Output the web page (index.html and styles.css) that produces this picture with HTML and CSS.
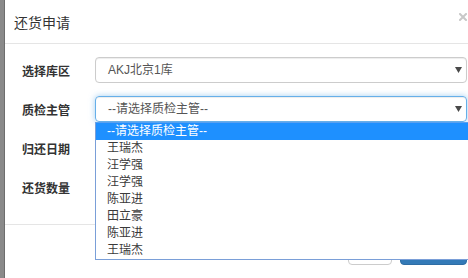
FILE: index.html
```html
<!DOCTYPE html>
<html lang="zh-CN">
<head>
<meta charset="utf-8">
<title>还货申请</title>
<link rel="stylesheet" href="styles.css">
</head>
<body>
<div class="modal">
  <div class="modal-header">
    <h4 class="modal-title">还货申请</h4>
    <button class="close" aria-label="关闭"><svg width="8" height="8" viewBox="0 0 8 8"><path d="M1 1L7 7M7 1L1 7" stroke="#c8c8c8" stroke-width="2" stroke-linecap="square"/></svg></button>
  </div>
  <div class="modal-body">
    <div class="form-row">
      <label class="control-label">选择库区</label>
      <div class="select"><span>AKJ北京1库</span><svg class="arrow" width="7" height="6" viewBox="0 0 7 6"><path d="M0 0H7L3.5 6Z" fill="#4a4a4a"/></svg></div>
    </div>
    <div class="form-row">
      <label class="control-label">质检主管</label>
      <div class="select focus"><span>--请选择质检主管--</span><svg class="arrow" width="7" height="6" viewBox="0 0 7 6"><path d="M0 0H7L3.5 6Z" fill="#4a4a4a"/></svg></div>
    </div>
    <div class="form-row">
      <label class="control-label">归还日期</label>
      <div class="input"></div>
    </div>
    <div class="form-row">
      <label class="control-label">还货数量</label>
      <div class="input"></div>
    </div>
  </div>
  <div class="modal-footer">
    <button class="btn btn-default">关闭</button>
    <button class="btn btn-primary">提交</button>
  </div>
</div>
<ul class="dropdown">
  <li class="active">--请选择质检主管--</li>
  <li>王瑞杰</li>
  <li>汪学强</li>
  <li>汪学强</li>
  <li>陈亚进</li>
  <li>田立豪</li>
  <li>陈亚进</li>
  <li>王瑞杰</li>
</ul>
</body>
</html>
```
FILE: styles.css
```css
html, body {
  margin: 0;
  padding: 0;
  width: 468px;
  height: 278px;
  overflow: hidden;
}
body {
  background: #8a8a8a;
  font-family: "Liberation Sans", "Noto Sans CJK SC", sans-serif;
  color: #333;
  position: relative;
}
.modal {
  margin-left: 4px;
  width: 478px;
  height: 278px;
  box-sizing: border-box;
  background: #fff;
  border-left: 1px solid #6e6e6e;
  display: flex;
  flex-direction: column;
}
.modal-header {
  height: 43px;
  border-bottom: 1px solid #e5e5e5;
  display: flex;
  justify-content: space-between;
  align-items: center;
  padding: 0 15px 0 9px;
}
.modal-title {
  margin: 0;
  font-size: 14px;
  font-weight: normal;
  color: #333;
  line-height: 20px;
  margin-top: 2px;
}
.close {
  border: 0;
  background: none;
  padding: 0;
  width: 8px;
  height: 8px;
  align-self: flex-start;
  margin-top: 13px;
  display: flex;
}
.modal-body {
  padding: 13px 15px 24px 17px;
  display: flex;
  flex-direction: column;
  gap: 13px;
}
.form-row {
  display: flex;
  align-items: center;
  height: 26px;
}
.control-label {
  width: 73px;
  font-size: 12px;
  font-weight: bold;
  color: #333;
}
.select, .input {
  flex: 1;
  height: 26px;
  box-sizing: border-box;
  border: 1px solid #ccc;
  border-radius: 4px;
  box-shadow: inset 0 1px 1px rgba(0,0,0,.075);
  display: flex;
  align-items: center;
  justify-content: space-between;
  padding: 0 4px 0 12px;
  font-size: 12px;
  color: #555;
}
.select span { line-height: 16px; }
.select.focus {
  border-color: #66afe9;
  box-shadow: inset 0 1px 1px rgba(0,0,0,.075), 0 0 6px rgba(102,175,233,.6);
}
.arrow { display: block; }
.modal-footer {
  border-top: 1px solid #e5e5e5;
  padding: 11px 15px 0 15px;
  display: flex;
  justify-content: flex-end;
  gap: 8px;
}
.btn {
  height: 29px;
  border-radius: 4px;
  font-family: inherit;
  font-size: 12px;
  padding: 0;
  box-sizing: border-box;
}
.btn-default {
  width: 44px;
  background: #fff;
  border: 1px solid #ccc;
  color: #333;
}
.btn-primary {
  width: 67px;
  background: #337ab7;
  border: 1px solid #2e6da4;
  color: #fff;
}
.dropdown {
  position: absolute;
  left: 95px;
  top: 122px;
  width: 380px;
  margin: 0;
  padding: 0;
  list-style: none;
  background: #fff;
  border: 1px solid #7a9fd8;
  border-top-color: #5aa0f0;
  font-size: 12px;
  color: #3a3a3a;
}
.dropdown li {
  height: 17px;
  line-height: 17px;
  padding-left: 11px;
}
.dropdown li.active {
  background: #1e90ff;
  color: #fff;
}
```
